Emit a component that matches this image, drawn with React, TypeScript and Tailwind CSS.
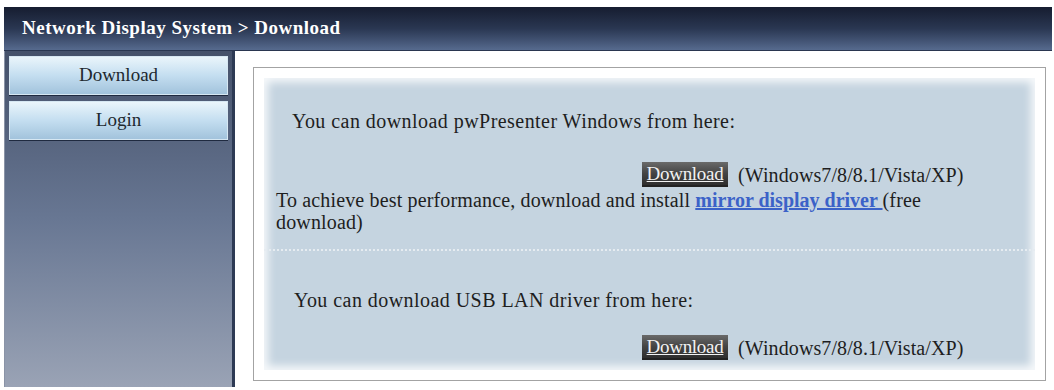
import React from "react";

const serif = { fontFamily: '"Liberation Serif", "Times New Roman", serif' };

function DlButton() {
  return (
    <span className="inline-block h-[25px] w-[86px] bg-gradient-to-b from-[#6a6a6a] via-[#444444] to-[#2e2e2e] border-b-2 border-[#222] text-[#f2f2f2] text-[19px] leading-[23px] text-center underline tracking-[-0.3px]">
      Download
    </span>
  );
}

export default function App() {
  return (
    <div className="w-[1054px] h-[390px] bg-white pt-[7px] pl-[4px] pr-[2px] overflow-hidden text-[#1e1e1e]" style={serif}>
      <div className="h-[44px] bg-gradient-to-b from-[#161d30] via-[#2a3752] to-[#566a8e] flex items-center pl-[18px] border-b border-[#2a3650]">
        <span className="text-white font-bold text-[19px] tracking-[0.5px]">Network Display System &gt; Download</span>
      </div>
      <div className="flex">
        <div className="w-[228px] h-[336px] bg-gradient-to-b from-[#45516a] via-[#687793] to-[#9aa3b5] border-l border-[#8a93a6] px-[4px] pt-[5px] flex flex-col gap-[6px]">
          <div className="h-[39px] bg-gradient-to-b from-[#eaf5fb] via-[#c4def0] to-[#a2c3dc] border border-[#d6e7f2] flex items-center justify-center text-[19px] text-[#20282e] shadow-[0_1px_0_#1f2a40]">
            Download
          </div>
          <div className="h-[39px] bg-gradient-to-b from-[#eaf5fb] via-[#c4def0] to-[#a2c3dc] border border-[#d6e7f2] flex items-center justify-center text-[19px] text-[#20282e] shadow-[0_1px_0_#1f2a40]">
            Login
          </div>
        </div>
        <div className="w-[3px] h-[336px] bg-[#2d3a54]"></div>
        <div className="flex-1 pl-[18px] pt-[16px]">
          <div className="w-[793px] h-[314px] border border-[#a3a3a3] bg-white p-[10px]">
            <div className="h-full bg-[#c5d4e0] shadow-[inset_0_0_8px_4px_rgba(255,255,255,0.85)] flex flex-col text-[20px] leading-[22px] tracking-[0.45px]">
              <div className="pl-[28px] pt-[32px]">You can download pwPresenter Windows from here:</div>
              <div className="pl-[378px] mt-[30px] flex items-center gap-[10px]">
                <DlButton />
                <span className="tracking-[0.1px]">(Windows7/8/8.1/Vista/XP)</span>
              </div>
              <div className="pl-[12px] mt-[2px] whitespace-nowrap tracking-[0.15px]">
                To achieve best performance, download and install{" "}
                <a className="font-bold text-[#3b62c8] underline tracking-[0px]">mirror display driver </a> (free
                <br />
                download)
              </div>
              <div className="mt-[16px] border-t-2 border-dotted border-[#e6ecf1]"></div>
              <div className="pl-[30px] mt-[38px]">You can download USB LAN driver from here:</div>
              <div className="pl-[378px] mt-[24px] flex items-center gap-[10px]">
                <DlButton />
                <span className="tracking-[0.1px]">(Windows7/8/8.1/Vista/XP)</span>
              </div>
            </div>
          </div>
        </div>
      </div>
    </div>
  );
}
